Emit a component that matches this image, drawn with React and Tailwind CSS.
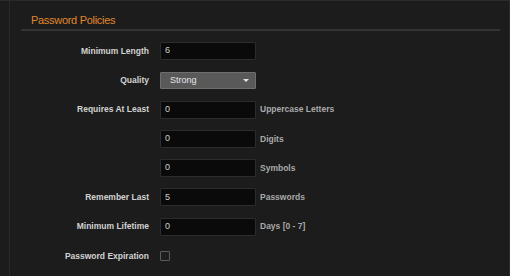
import React from "react";

const font = { fontFamily: '"Liberation Sans", Arial, sans-serif' };

function Row({ label, children, suffix }) {
  return (
    <div className="flex items-center h-[18px]">
      <div className="w-[128px] text-right text-[8.5px] font-bold text-[#d2d2d2]">{label}</div>
      <div className="ml-[11px] flex items-center">{children}</div>
      {suffix && <div className="ml-[4px] text-[8.5px] font-bold text-[#a9a9a9]">{suffix}</div>}
    </div>
  );
}

function Input({ value }) {
  return (
    <div className="w-[96px] h-[18px] bg-[#0a0a0a] border border-[#2c2c2c] rounded-[1px] flex items-center pl-[4px] text-[9px] text-[#d0d0d0]">
      {value}
    </div>
  );
}

export default function App() {
  return (
    <div style={font} className="w-[510px] h-[276px] bg-[#1c1c1c] border-t border-[#2b2b2b] flex overflow-hidden">
      <div className="w-[9px] shrink-0" />
      <div className="flex-1 border-l border-[#2a2a2a] border-r border-r-[#2a2a2a] pl-[11px] pr-[9px]">
        <div className="h-[30px] border-b-2 border-[#333333] pl-[10px] pt-[13px]">
          <span className="text-[11px] leading-[13px] tracking-[-0.3px] text-[#e0872a] block">Password Policies</span>
        </div>
        <div className="mt-[11px] flex flex-col gap-[11.3px]">
          <Row label="Minimum Length">
            <Input value="6" />
          </Row>
          <Row label="Quality">
            <div className="w-[96px] h-[17px] bg-[#595959] border border-[#6e6e6e] rounded-[1px] flex items-center justify-between pl-[9px] pr-[6px] text-[9px] text-[#e6e6e6]">
              <span>Strong</span>
              <svg width="6" height="3" viewBox="0 0 6 3">
                <path d="M0 0 L6 0 L3 3 Z" fill="#e5e5e5" />
              </svg>
            </div>
          </Row>
          <Row label="Requires At Least" suffix="Uppercase Letters">
            <Input value="0" />
          </Row>
          <Row label="" suffix="Digits">
            <Input value="0" />
          </Row>
          <Row label="" suffix="Symbols">
            <Input value="0" />
          </Row>
          <Row label="Remember Last" suffix="Passwords">
            <Input value="5" />
          </Row>
          <Row label="Minimum Lifetime" suffix="Days [0 - 7]">
            <Input value="0" />
          </Row>
          <Row label="Password Expiration">
            <div className="w-[10px] h-[10px] border border-[#5c5c5c] bg-[#1e1e1e] rounded-[1px]" />
          </Row>
        </div>
      </div>
    </div>
  );
}
